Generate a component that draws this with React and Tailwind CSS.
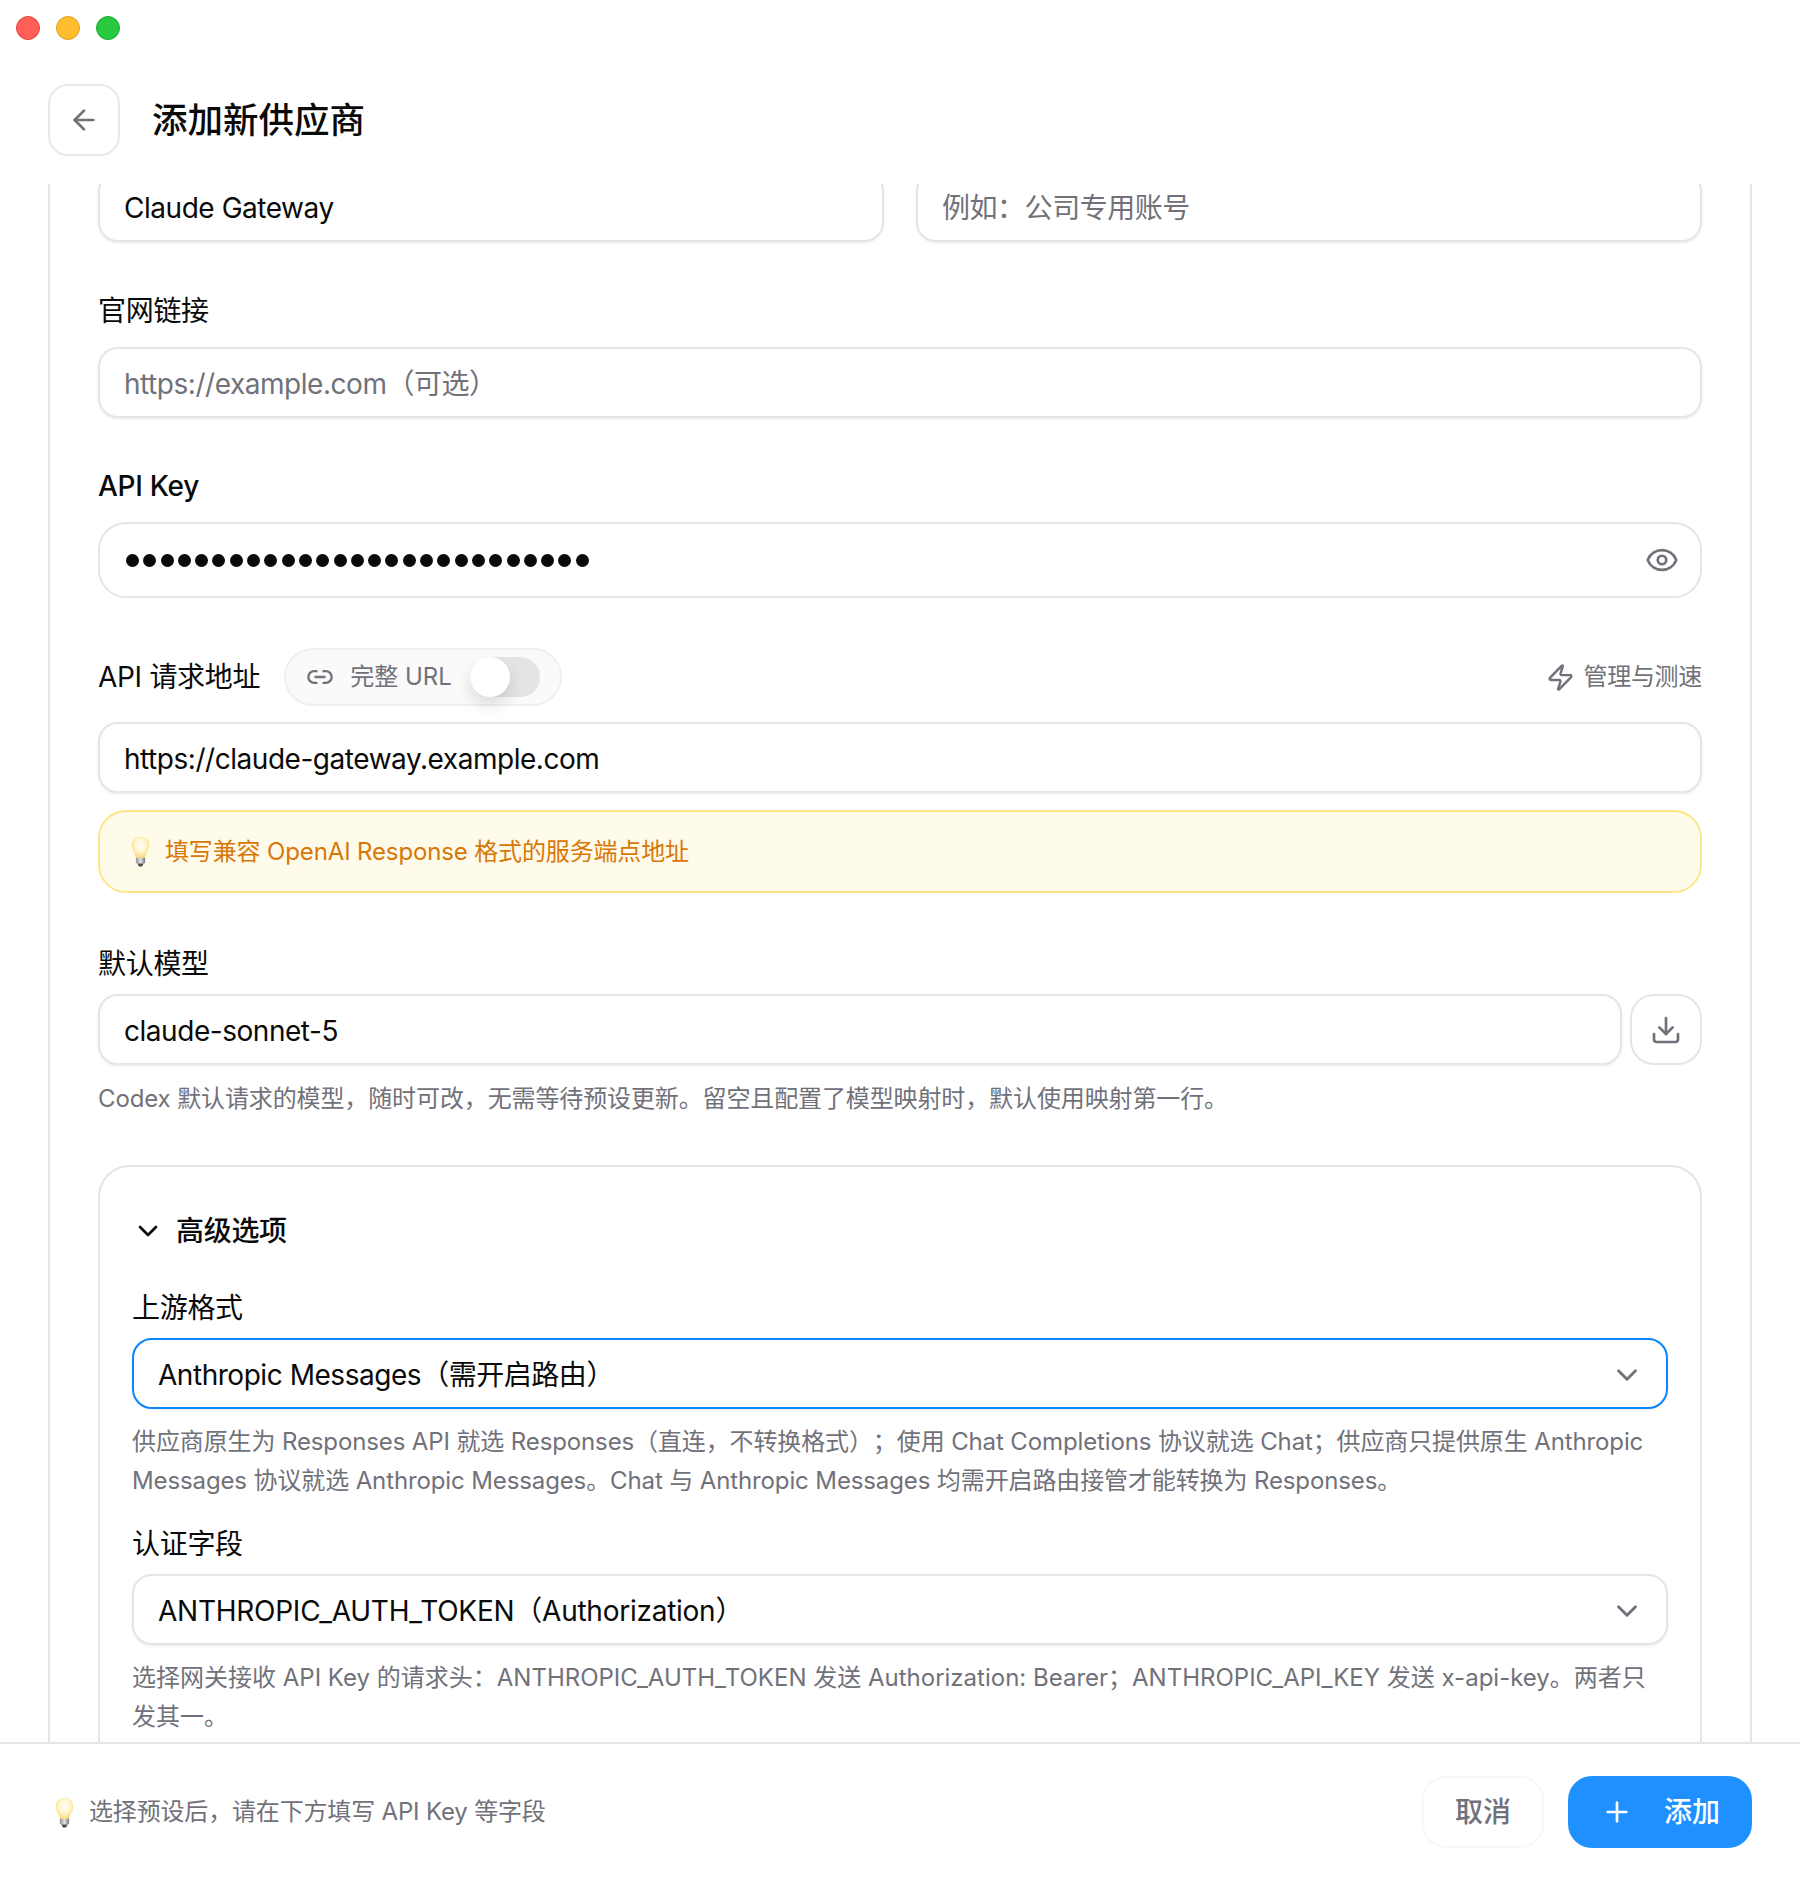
import React from 'react';
import { ArrowLeft, ChevronDown, Download, Eye, Link2, Plus, Zap } from 'lucide-react';

const Bulb = ({ id, className }) => (
  <svg viewBox="0 0 18 30" className={className}>
    <defs>
      <radialGradient id={`${id}-glass`} cx="50%" cy="40%" r="58%">
        <stop offset="0%" stopColor="#fffef6" />
        <stop offset="55%" stopColor="#fff6cf" />
        <stop offset="100%" stopColor="#fbd978" />
      </radialGradient>
      <linearGradient id={`${id}-base`} x1="0" x2="1" y1="0" y2="0">
        <stop offset="0%" stopColor="#8d8d92" />
        <stop offset="50%" stopColor="#e2e2e4" />
        <stop offset="100%" stopColor="#77777c" />
      </linearGradient>
    </defs>
    <path d="M9 .5C4.200.5.500 4.200.500 9c0 4.800 3 6.800 4 12.500h9c1-5.700 4-7.700 4-12.500C17.500 4.200 13.800.5 9 .5z" fill={`url(#${id}-glass)`} />
    <rect x="4.500" y="21" width="9" height="5.500" rx="1" fill={`url(#${id}-base)`} />
    <path d="M6 26.500h6l-1.500 3h-3z" fill="#4b4b50" />
  </svg>
);

const Label = ({ children, className = '' }) => (
  <div className={`text-[28px] leading-[36px] tracking-[-0.3px] text-[#0a0a0a] ${className}`}>{children}</div>
);

const Field = ({ children, muted, className = '' }) => (
  <div className={`flex h-[71px] items-center rounded-[20px] border-2 border-[#e5e5e5] bg-white px-[24px] pt-[2px] text-[28px] tracking-[-0.46px] shadow-[0_1px_3px_rgba(0,0,0,0.08)] ${muted ? 'text-[#71717a]' : 'text-[#0a0a0a]'} ${className}`}>
    {children}
  </div>
);

const Help = ({ children, className = '' }) => (
  <p className={`text-[24px] leading-[38.4px] text-[#71717a] ${className}`}>{children}</p>
);

const apiKeyDots = Array.from({ length: 27 }, (_, i) => i);

export default function App() {
  return (
    <div className="flex h-[1880px] w-[1800px] flex-col overflow-hidden bg-white font-[Inter,'Noto_Sans_CJK_SC',sans-serif] [text-spacing-trim:space-all]">
      {/* Title bar + header */}
      <div className="h-[184px] shrink-0 px-[16px] pt-[16px]">
        <div className="flex gap-[16px]">
          <span className="h-[24px] w-[24px] rounded-full border border-[#e0443e] bg-[#ff5f57]" />
          <span className="h-[24px] w-[24px] rounded-full border border-[#dea123] bg-[#febc2e]" />
          <span className="h-[24px] w-[24px] rounded-full border border-[#1aab29] bg-[#28c840]" />
        </div>
        <div className="mt-[44px] flex items-center gap-[32px] pl-[32px]">
          <button className="flex h-[72px] w-[72px] items-center justify-center rounded-[20px] border-2 border-[#e8e8e8] bg-white text-[#71717a]">
            <ArrowLeft size={32} strokeWidth={2} />
          </button>
          <h1 className="pt-[2px] text-[35.5px] font-medium leading-[44px] text-[#0a0a0a]">添加新供应商</h1>
        </div>
      </div>

      {/* Scrolled form */}
      <div className="min-h-0 flex-1 overflow-hidden">
        <div className="mx-[48px] -mt-[13px] h-[1600px] border-x-2 border-[#e5e5e5] px-[48px]">
          <div className="grid grid-cols-2 gap-[32px]">
            <Field>Claude Gateway</Field>
            <Field muted>例如：公司专用账号</Field>
          </div>

          <Label className="mt-[51px]">官网链接</Label>
          <Field muted className="mt-[18px]">https://example.com（可选）</Field>

          <Label className="mt-[50px] font-medium">API Key</Label>
          <div className="mt-[18px] flex h-[76px] items-center justify-between rounded-[28px] border-2 border-[#e5e5e5] bg-white pl-[26px] pr-[21px]">
            <div className="flex items-center gap-[4.300px]">
              {apiKeyDots.map((i) => (
                <span key={i} className="h-[13px] w-[13px] rounded-full bg-[#0a0a0a]" />
              ))}
            </div>
            <Eye size={34} strokeWidth={1.9} className="text-[#71717a]" />
          </div>

          <div className="mt-[51px] flex h-[56px] items-center justify-between">
            <div className="flex items-center gap-[24px]">
              <Label>API 请求地址</Label>
              <div className="relative flex h-[58px] items-center rounded-full border-2 border-[#f0f0f0] bg-[#fafafa] pl-[20px] pr-[20px] text-[24px] text-[#71717a]">
                <Link2 size={28} strokeWidth={2} className="mr-[16px]" />
                <span>完整 URL</span>
                <span className="relative ml-[18px] h-[40px] w-[70px] rounded-full bg-[#e4e4e7]">
                  <span className="absolute left-0 top-0 h-[40px] w-[40px] rounded-full bg-white shadow-[0_8px_16px_rgba(0,0,0,0.12)]" />
                </span>
              </div>
            </div>
            <div className="flex items-center gap-[9px] text-[24px] tracking-[-0.3px] text-[#71717a]">
              <Zap size={29} strokeWidth={2} />
              <span>管理与测速</span>
            </div>
          </div>

          <Field className="mt-[17px]">https://claude-gateway.example.com</Field>

          <div className="mt-[17px] flex h-[83px] items-center rounded-[28px] border-2 border-[#fde68a] bg-[#fffbeb] pl-[31px] text-[24px] tracking-[-0.14px] text-[#d97706]">
            <Bulb id="tip" className="mr-[15px] h-[31px] w-[19px]" />
            <span>填写兼容 OpenAI Response 格式的服务端点地址</span>
          </div>

          <Label className="mt-[53px]">默认模型</Label>
          <div className="mt-[12px] flex gap-[8px]">
            <Field className="flex-1">claude-sonnet-5</Field>
            <button className="flex h-[71px] w-[72px] items-center justify-center rounded-[24px] border-2 border-[#e5e5e5] bg-white text-[#71717a]">
              <Download size={32} strokeWidth={2} />
            </button>
          </div>
          <Help className="mt-[15px] tracking-[-0.12px]">Codex 默认请求的模型，随时可改，无需等待预设更新。留空且配置了模型映射时，默认使用映射第一行。</Help>

          {/* Advanced options */}
          <div className="mt-[47px] rounded-[32px] border-2 border-[#e5e5e5] px-[32px] pb-[60px] pt-[46px]">
            <div className="flex items-center gap-[12px] text-[#0a0a0a]">
              <ChevronDown size={32} strokeWidth={2} />
              <span className="text-[28px] font-medium leading-[36px] tracking-[-0.3px]">高级选项</span>
            </div>

            <Label className="mt-[41px]">上游格式</Label>
            <Field className="mt-[12px] justify-between !border-[#0a84ff]">
              <span>Anthropic Messages（需开启路由）</span>
              <ChevronDown size={34} strokeWidth={2} className="-mr-[2px] text-[#71717a]" />
            </Field>
            <Help className="mt-[14px] tracking-[-0.12px]">
              供应商原生为 Responses API 就选 Responses（直连，不转换格式）；使用 Chat Completions 协议就选 Chat；供应商只提供原生 Anthropic Messages 协议就选 Anthropic Messages。Chat 与 Anthropic Messages 均需开启路由接管才能转换为 Responses。
            </Help>

            <Label className="mt-[26px]">认证字段</Label>
            <Field className="mt-[12px] justify-between">
              <span className="tracking-[-0.25px]">ANTHROPIC_AUTH_TOKEN（Authorization）</span>
              <ChevronDown size={34} strokeWidth={2} className="-mr-[2px] text-[#71717a]" />
            </Field>
            <Help className="mt-[14px]">
              选择网关接收 API Key 的请求头：ANTHROPIC_AUTH_TOKEN 发送 Authorization: Bearer；ANTHROPIC_API_KEY 发送 x-api-key。两者只<br />发其一。
            </Help>
          </div>
        </div>
      </div>

      {/* Footer */}
      <div className="flex h-[138px] shrink-0 items-center justify-between border-t-2 border-[#e5e5e5] bg-white pl-[55px] pr-[48px]">
        <div className="flex items-center gap-[15px] text-[24px] tracking-[-0.17px] text-[#71717a]">
          <Bulb id="footer" className="h-[31px] w-[19px]" />
          <span>选择预设后，请在下方填写 API Key 等字段</span>
        </div>
        <div className="flex items-center gap-[24px]">
          <button className="h-[72px] w-[122px] rounded-[24px] border-2 border-[#f7f7f7] text-[28px] font-medium text-[#71717a]">取消</button>
          <button className="flex h-[72px] w-[184px] items-center gap-[31px] rounded-[24px] bg-[#1e90ff] pl-[33px] text-[28px] font-medium text-white">
            <Plus size={32} strokeWidth={2} />
            <span>添加</span>
          </button>
        </div>
      </div>
    </div>
  );
}
